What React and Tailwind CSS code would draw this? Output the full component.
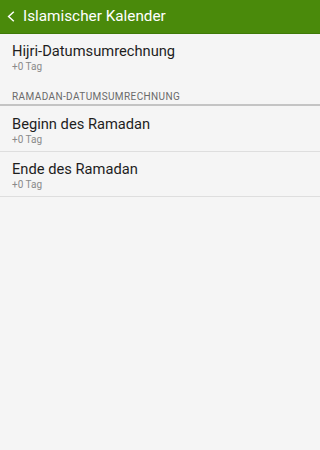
import React from "react";

function Item({ title, sub, pt }) {
  return (
    <div className={`pl-[12px] ${pt} pb-[4px] border-b border-[#dedede]`}>
      <div className="text-[14.7px] leading-[18px] text-[#1e1e1e]">{title}</div>
      <div className="text-[10px] leading-[14px] text-[#8a8a8a]">{sub}</div>
    </div>
  );
}

export default function App() {
  return (
    <div className="w-full min-h-screen h-[450px] bg-[#f5f5f5] flex flex-col" style={{ fontFamily: "Roboto, 'Noto Sans', sans-serif" }}>
      <div className="h-[34px] bg-[#4a8a0b] flex items-center shrink-0 border-b border-[#3f7a08]">
        <svg className="ml-[7px]" width="8" height="11" viewBox="0 0 8 11">
          <path d="M6.8 0.7 L1.6 5.5 L6.8 10.3" fill="none" stroke="#ffffff" strokeWidth="1.5" />
        </svg>
        <span className="ml-[8px] text-[15.3px] text-white">Islamischer Kalender</span>
      </div>
      <div className="pl-[12px] pt-[8px]">
        <div className="text-[14.7px] leading-[18px] text-[#1e1e1e]">Hijri-Datumsumrechnung</div>
        <div className="text-[10px] leading-[14px] text-[#8a8a8a]">+0 Tag</div>
      </div>
      <div className="pl-[12px] pt-[17px] pb-[1px] text-[10px] tracking-[0.4px] leading-[12px] text-[#6a6a6a] border-b-2 border-[#c4c4c4]">
        RAMADAN-DATUMSUMRECHNUNG
      </div>
      <Item title="Beginn des Ramadan" sub="+0 Tag" pt="pt-[9px]" />
      <Item title="Ende des Ramadan" sub="+0 Tag" pt="pt-[8px]" />
    </div>
  );
}
